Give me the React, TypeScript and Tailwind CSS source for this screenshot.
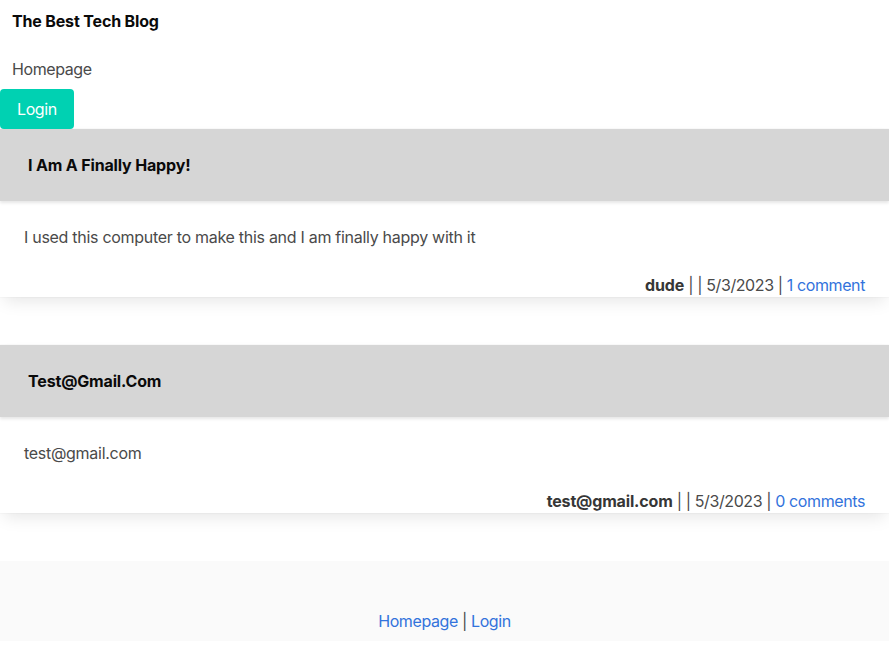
const posts = [
  {
    title: "I Am A Finally Happy!",
    body: "I used this computer to make this and I am finally happy with it",
    author: "dude",
    date: "5/3/2023",
    comments: "1 comment",
  },
  {
    title: "Test@Gmail.Com",
    body: "test@gmail.com",
    author: "test@gmail.com",
    date: "5/3/2023",
    comments: "0 comments",
  },
];

const App = () => {
  return (
    <div className="min-h-[666px] bg-white font-['Inter',sans-serif] text-base tracking-[-0.025em] text-[#4a4a4a]">
      <header>
        <div className="px-3 pt-[9px] leading-6">
          <h1 className="font-bold tracking-[-0.01em] text-[#0a0a0a]">The Best Tech Blog</h1>
        </div>
        <nav className="mt-6 px-3 leading-6">
          <a className="text-[#4a4a4a]">Homepage</a>
        </nav>
        <button className="mt-2 h-10 rounded bg-[#00d1b2] px-[17px] text-white leading-6">
          Login
        </button>
      </header>
      <main>
        {posts.map((p) => (
          <div
            key={p.title}
            className="mb-12 bg-white shadow-[0_8px_16px_-4px_rgba(10,10,10,0.1),0_0_0_1px_rgba(10,10,10,0.02)]"
          >
            <div className="bg-[#d6d6d6] px-7 py-6 leading-6 shadow-[0_2px_3px_rgba(10,10,10,0.1)]">
              <h2 className="font-bold tracking-[-0.01em] text-[#0a0a0a]">{p.title}</h2>
            </div>
            <div className="px-6 pt-6 leading-6">
              <p className="tracking-[-0.018em]">{p.body}</p>
              <p className="mt-6 text-right">
                <strong className="font-bold tracking-[-0.01em] text-[#363636]">{p.author}</strong> | | {p.date} |{" "}
                <a className="text-[#3273dc]">{p.comments}</a>
              </p>
            </div>
          </div>
        ))}
      </main>
      <footer className="bg-[#fafafa] pt-12 pb-2 text-center leading-6">
        <a className="text-[#3273dc]">Homepage</a> | <a className="text-[#3273dc]">Login</a>
      </footer>
    </div>
  );
};

export default App;
